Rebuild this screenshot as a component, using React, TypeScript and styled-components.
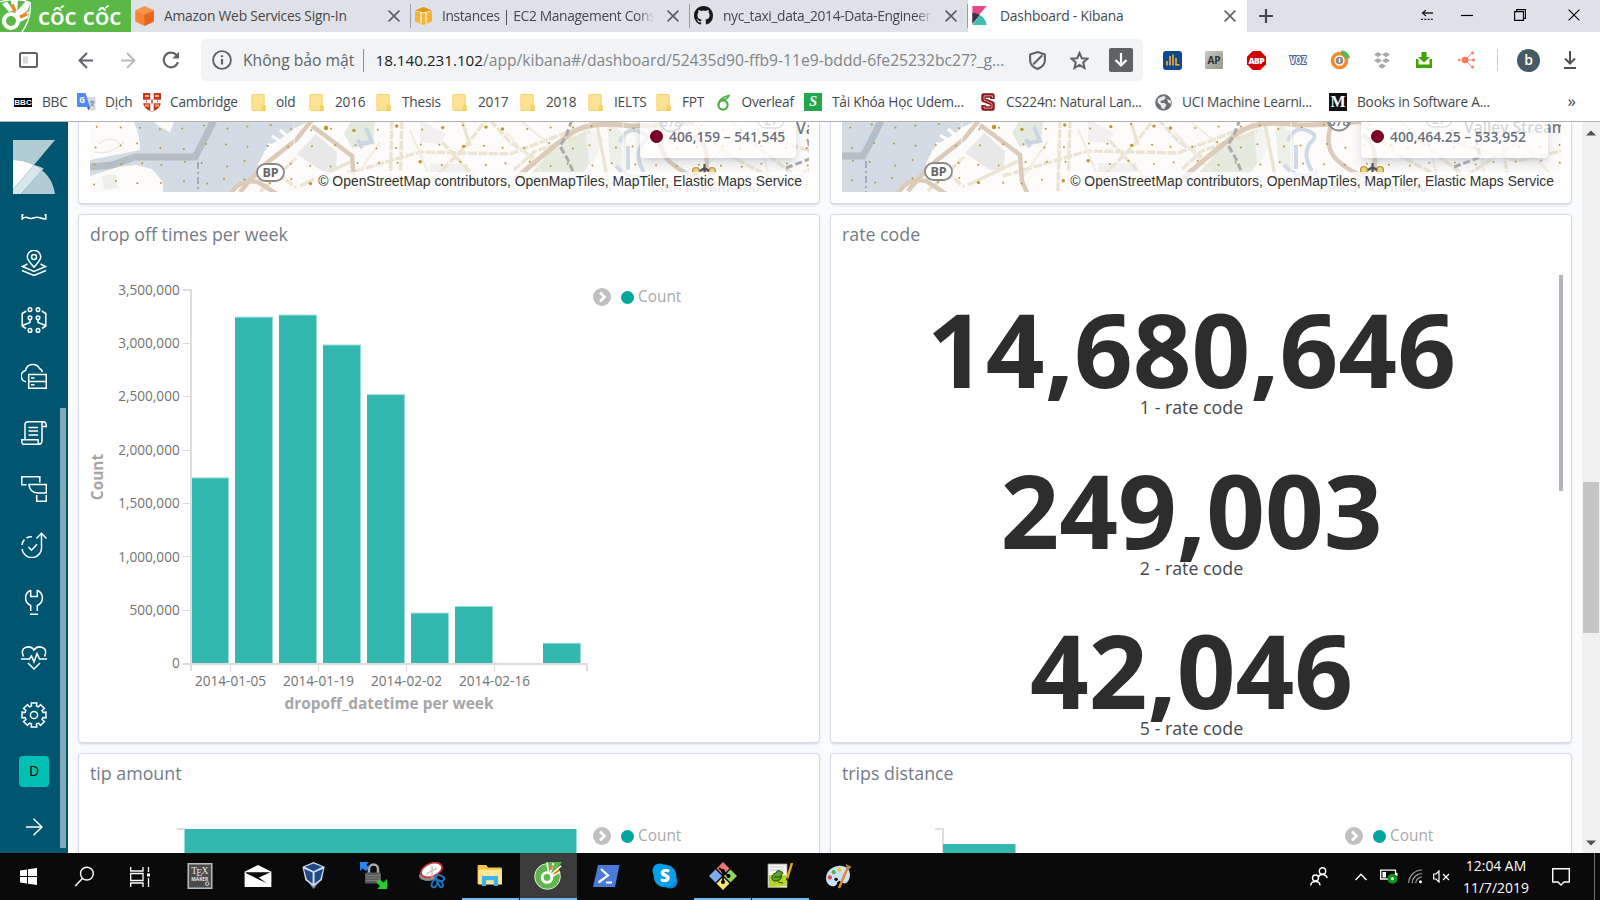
import React from 'react';
import styled, { createGlobalStyle, css } from 'styled-components';

const GlobalStyle = createGlobalStyle`
  * { box-sizing: border-box; }
  html, body { margin: 0; padding: 0; overflow: hidden; }
  body { font-family: 'Open Sans', 'Noto Sans', sans-serif; color: #2d2d2d; }
  svg { display: block; flex: none; }
`;

const Screen = styled.div`
  width: 1600px;
  height: 900px;
  display: flex;
  flex-direction: column;
  overflow: hidden;
  background: #fff;
`;

/* ---------- browser chrome ---------- */

const TabStrip = styled.div`
  display: flex;
  height: 32px;
  flex: none;
  background: #dee1e6;
`;

const Brand = styled.div`
  width: 131px;
  height: 32px;
  flex: none;
  display: flex;
  align-items: center;
  background: #5ab946;
  overflow: hidden;
`;

const BrandName = styled.span`
  margin-left: 6px;
  color: #fff;
  font-size: 24px;
  line-height: 30px;
  font-weight: 600;
  white-space: nowrap;
`;

const Tab = styled.div<{ $width: number; $active?: boolean; $divider?: boolean }>`
  width: ${p => p.$width}px;
  height: 32px;
  flex: none;
  display: flex;
  align-items: center;
  padding: 0 11px 1px 4px;
  background: ${p => (p.$active ? '#fff' : 'transparent')};
  ${p => p.$divider && css`
    background: linear-gradient(#9a9da2, #9a9da2) right 4px / 1px 24px no-repeat;
  `}
`;

const TabTitle = styled.span<{ $fade?: boolean; $gap?: number }>`
  flex: 1;
  margin: 0 8px 0 ${p => p.$gap ?? 10}px;
  overflow: hidden;
  white-space: nowrap;
  font-size: 13.8px;
  letter-spacing: -0.2px;
  line-height: 22px;
  color: #45494d;
  ${p => p.$fade && css`
    letter-spacing: -0.36px;
    mask-image: linear-gradient(90deg, #000 90%, transparent 98%);
  `}
`;

const StripSpacer = styled.div`
  flex: 1;
`;

const WindowControls = styled.div`
  display: grid;
  grid-template-columns: 40px 40px 66px 42px;
  justify-items: center;
  align-items: center;
  padding: 0 5px 2px 0;
`;

const NewTab = styled.div`
  display: flex;
  align-items: center;
  padding: 0 0 1px 12px;
`;

const Toolbar = styled.div`
  height: 52px;
  flex: none;
  display: flex;
  padding-top: 7px;
`;

const NavButtons = styled.div`
  width: 201px;
  height: 42px;
  display: grid;
  grid-template-columns: 56px 59px 27px 57px;
  justify-items: center;
  align-items: center;
`;

const Omnibox = styled.div`
  width: 942px;
  height: 42px;
  display: flex;
  align-items: center;
  padding: 0 10px 0 11px;
  border-radius: 5px;
  background: #f1f3f4;
  font-size: 15.66px;
`;

const SecurityLabel = styled.span`
  width: 121px;
  margin-left: 11px;
  padding-bottom: 1px;
  color: #5f6368;
  white-space: nowrap;
  border-right: 1px solid #8a8d91;
`;

const Address = styled.span`
  flex: 1;
  margin-left: 11.5px;
  color: #80868b;
  white-space: nowrap;
  padding-bottom: 1px;
`;

const AddressHost = styled.span`
  color: #202124;
  font-size: 15.2px;
`;

const OmniActions = styled.div`
  display: grid;
  grid-template-columns: 41.5px 39px 24px;
  align-items: center;
`;

const Extensions = styled.div`
  height: 42px;
  padding-left: 8px;
  display: grid;
  grid-template-columns: repeat(8, 42px);
  justify-items: center;
  align-items: center;
`;

const ProfileArea = styled.div`
  height: 22px;
  flex: 1;
  display: flex;
  align-items: center;
  margin: 10px 0 10px 10px;
  padding-left: 19px;
  border-left: 1px solid #c8cacc;
`;

const Avatar = styled.span`
  width: 23px;
  height: 23px;
  margin-right: 24px;
  border-radius: 50%;
  background: #455a64;
  color: #fff;
  font-size: 14px;
  font-weight: 600;
  line-height: 22px;
  text-align: center;
`;

const BookmarkBar = styled.div`
  height: 38px;
  flex: none;
  display: flex;
  align-items: center;
  padding: 0 0 1px 14px;
  border-bottom: 1px solid #b3b3b3;
`;

const Bookmark = styled.div<{ $width: number; $gap: number }>`
  width: ${p => p.$width}px;
  flex: none;
  display: flex;
  align-items: center;
  gap: ${p => p.$gap}px;
  font-size: 13.7px;
  letter-spacing: -0.22px;
  line-height: 20px;
  color: #45494d;
  white-space: nowrap;
`;

const BbcMark = styled.span`
  width: 18px;
  height: 9px;
  background: #000;
  color: #fff;
  font: 700 8px/9px 'Liberation Sans', sans-serif;
  letter-spacing: 0;
  text-align: center;
`;

const LetterTile = styled.span<{ $bg: string; $size: number; $font?: string; $color?: string; $radius?: number }>`
  width: ${p => p.$size}px;
  height: ${p => p.$size}px;
  flex: none;
  border-radius: ${p => p.$radius ?? 0}px;
  background: ${p => p.$bg};
  color: ${p => p.$color ?? '#fff'};
  font: ${p => p.$font ?? "700 13px 'Liberation Serif', serif"};
  line-height: ${p => p.$size}px;
  text-align: center;
`;

const Overflow = styled.span`
  margin-left: auto;
  margin-right: 24px;
  padding-bottom: 3px;
  font-size: 17px;
  line-height: 18px;
  color: #45494d;
`;

/* ---------- dashboard ---------- */

const Page = styled.div`
  height: 731px;
  flex: none;
  display: flex;
  overflow: hidden;
`;

const SideNav = styled.nav`
  width: 68px;
  flex: none;
  display: flex;
  background: #005571;
`;

const NavItems = styled.div`
  width: 60px;
  display: flex;
  flex-direction: column;
  padding: 18px 0 0 8px;
`;

const NavItem = styled.div`
  height: 56.4px;
  flex: none;
  display: flex;
  align-items: center;
  justify-content: center;
`;

const LogoItem = styled.div`
  height: 95.3px;
  flex: none;
  padding-left: 5px;
  display: flex;
  flex-direction: column;
  gap: 20px;
`;

const ClippedIcon = styled.div`
  padding-left: 8px;
`;

const SpaceBadge = styled.span`
  width: 30px;
  height: 31px;
  border-radius: 4px;
  background: #00bfb3;
  color: #000;
  font-size: 14px;
  line-height: 30px;
  text-align: center;
`;

const NavThumb = styled.div`
  width: 6px;
  height: 440px;
  margin-top: 286px;
  background: #80aab8;
`;

const Board = styled.main`
  flex: 1;
  display: grid;
  grid-template-columns: 742px 742px;
  grid-template-rows: 82px 529px 200px;
  gap: 10px;
  padding-left: 10px;
  background: #fafbfd;
  overflow: hidden;
`;

const Panel = styled.section<{ $cut?: boolean }>`
  display: flex;
  flex-direction: column;
  overflow: hidden;
  background: #fff;
  border: 1px solid #d3dae6;
  border-radius: 4px;
  box-shadow: 0 2px 2px -1px rgba(152, 162, 179, 0.3), 0 1px 5px -2px rgba(152, 162, 179, 0.3);
  ${p => p.$cut && css`
    border-top: 0;
    border-top-left-radius: 0;
    border-top-right-radius: 0;
  `}
`;

const PanelTitle = styled.h2`
  height: 38px;
  flex: none;
  margin: 0;
  padding-left: 11px;
  font-size: 17.8px;
  font-weight: 400;
  line-height: 39px;
  color: #747b87;
`;

const PanelBody = styled.div`
  flex: 1;
  display: flex;
  padding-left: 11px;
  min-height: 0;
`;

const MapFrame = styled.div`
  position: relative;
  width: 719px;
  height: 70px;
  margin-left: 11px;
  overflow: hidden;
`;

const MapLegend = styled.div<{ $width: number; $right: number }>`
  position: absolute;
  top: -40px;
  right: ${p => p.$right}px;
  width: ${p => p.$width}px;
  height: 76px;
  display: flex;
  align-items: flex-end;
  gap: 6px;
  padding: 0 0 12px 10px;
  border-radius: 4px;
  background: rgba(255, 255, 255, 0.7);
  box-shadow: 0 6px 12px -1px rgba(152, 162, 179, 0.35), 0 2px 4px -1px rgba(152, 162, 179, 0.3);
  color: #69707d;
  font-size: 13.8px;
  font-weight: 600;
  line-height: 18px;
  white-space: nowrap;
`;

const MapLegendDot = styled.i`
  width: 13px;
  height: 13px;
  margin-bottom: 3px;
  border-radius: 50%;
  background: #800026;
  border: 1px solid #5a001b;
`;

const Attribution = styled.div`
  position: absolute;
  right: 0;
  bottom: 0;
  height: 20px;
  padding: 0 7px 0 4px;
  background: rgba(255, 255, 255, 0.75);
  color: #333;
  font: 13.92px/19px 'Liberation Sans', sans-serif;
  white-space: nowrap;
`;

const Legend = styled.div`
  height: 20px;
  display: flex;
  align-items: center;
  margin: 34px 0 0 1px;
  color: #a9a9a9;
  font-size: 15.4px;
  line-height: 18px;
`;

const LegendDot = styled.i`
  width: 13px;
  height: 13px;
  margin: 0 4px 0 10px;
  border-radius: 50%;
  background: #00a69b;
`;

const MetricList = styled.div`
  flex: 1;
  display: flex;
  flex-direction: column;
  align-items: center;
  padding-top: 45px;
`;

const Metric = styled.div`
  height: 160.6px;
  flex: none;
  display: flex;
  flex-direction: column;
  align-items: center;
`;

const MetricValue = styled.div`
  font-size: 102.8px;
  font-weight: 700;
  line-height: 101px;
  color: #2d2d2d;
`;

const MetricLabel = styled.div`
  margin-top: -4px;
  font-size: 17.8px;
  line-height: 24px;
  color: #45484e;
`;

const MetricThumb = styled.div`
  width: 4px;
  height: 216px;
  margin: 22px 8px 0 18px;
  background: #b2b5bd;
`;

const PageScroll = styled.div`
  width: 18px;
  flex: none;
  display: flex;
  flex-direction: column;
  align-items: center;
  padding-top: 8px;
  background: #f0f0f0;
`;

const PageThumb = styled.div`
  width: 16px;
  height: 151px;
  margin: 346px 0 207px;
  background: #c5c5c5;
`;

/* ---------- taskbar ---------- */

const Taskbar = styled.footer`
  height: 47px;
  flex: none;
  display: flex;
  background: #0a0a0a;
`;

const SystemButtons = styled.div`
  width: 171px;
  display: grid;
  grid-template-columns: 56px 56px 56px;
  justify-items: center;
  align-items: center;
`;

const TaskButton = styled.div<{ $open?: boolean; $active?: boolean }>`
  width: 57px;
  margin-right: 1.15px;
  display: flex;
  align-items: center;
  justify-content: center;
  border-bottom: 2px solid ${p => (p.$open ? '#76b9ed' : 'transparent')};
  background: ${p => (p.$active ? '#3b3b3b' : 'transparent')};
  background-clip: padding-box;
`;

const Tray = styled.div`
  flex: 1;
  display: flex;
  align-items: center;
  justify-content: flex-end;
`;

const TrayIcon = styled.span<{ $after: number }>`
  margin-right: ${p => p.$after}px;
`;

const Clock = styled.div`
  width: 68px;
  margin-right: 22px;
  color: #fff;
  font-size: 13.9px;
  line-height: 21.6px;
  text-align: center;
`;

const ShowDesktop = styled.div`
  width: 6px;
  height: 47px;
  border-left: 1px solid #6d6d6d;
`;

/* ---------- chrome icons ---------- */

const CloseIcon = ({ size = 12, color = '#5f6368', w = 1.7 }: { size?: number; color?: string; w?: number }) => (
  <svg width={size} height={size} viewBox="0 0 12 12" stroke={color} strokeWidth={w}>
    <path d="M.6.6 11.4 11.4M11.4.6.6 11.4" />
  </svg>
);

const BrandBird = () => (
  <svg width="32" height="32" viewBox="0 0 32 32">
    <path d="M9 12 2 4 7 1.500 13 10ZM12 11 11 0H18L17 12ZM15 13 26 1 30 3 28 10 18 18ZM18 17 29 11 28 18 20 22Z" fill="#fff" />
    <path d="M0 2Q16-3 30 2.500Q32 18 22 32" fill="none" stroke="#fff" strokeWidth="1.300" />
    <circle cx="11" cy="21" r="7" fill="#5ab946" stroke="#fff" strokeWidth="4" />
    <path d="M12 4.500 15 11.500M27 14 20 17" stroke="#f58220" strokeWidth="3.400" />
  </svg>
);

const AwsCube = () => (
  <svg width="19" height="20" viewBox="0 0 19 20.500">
    <path d="M9.500 0 19 4.500V16L9.500 20.500 0 16V4.500Z" fill="#f58534" />
    <path d="M9.500 9 19 4.500V16L9.500 20.500Z" fill="#e8651c" />
    <path d="M0 4.500 9.500 0 19 4.500 9.500 9Z" fill="#f9a25b" opacity=".55" />
  </svg>
);

const Ec2Cube = () => (
  <svg width="17" height="18" viewBox="0 0 17 18">
    <path d="M0 3.500 8.500 0 17 3.500V14.500L8.500 18 0 14.500Z" fill="#f7b334" />
    <path d="M0 3.500 8.500 6 17 3.500" fill="none" stroke="#fff" strokeWidth="1" />
    <path d="M6 6V16.500M11 6V16.500" stroke="#fff" strokeWidth="1.100" />
    <path d="M0 3.500 8.500 0 17 3.500 8.500 5.500Z" fill="#e19a1c" />
  </svg>
);

const GithubMark = () => (
  <svg width="19" height="19" viewBox="0 0 16 16" fill="#191717">
    <path d="M8 0C3.580 0 0 3.580 0 8c0 3.540 2.290 6.530 5.470 7.590.4.070.55-.17.55-.38 0-.19-.01-.82-.01-1.490-2.010.37-2.530-.49-2.690-.94-.09-.23-.48-.94-.82-1.130-.28-.15-.68-.52-.01-.53.63-.01 1.080.58 1.230.82.72 1.210 1.870.87 2.330.66.07-.52.28-.87.51-1.070-1.780-.2-3.640-.89-3.640-3.950 0-.87.31-1.590.82-2.150-.08-.2-.36-1.020.08-2.120 0 0 .67-.21 2.200.82a7.500 7.500 0 0 1 4 0c1.530-1.040 2.200-.82 2.200-.82.44 1.100.16 1.920.08 2.120.51.56.82 1.270.82 2.150 0 3.070-1.870 3.750-3.650 3.950.29.25.54.73.54 1.480 0 1.070-.01 1.930-.01 2.200 0 .21.15.46.55.38A8.010 8.010 0 0 0 16 8c0-4.420-3.580-8-8-8Z" />
  </svg>
);

const KibanaFavicon = () => (
  <svg width="15" height="19" viewBox="0 0 15 20">
    <path d="M0 0H15L0 18Z" fill="#e9478b" />
    <path d="M0 7Q5 7.500 8 9.500L0 19Z" fill="#343741" />
    <path d="M0 20 8 9.500Q14 13 15 20Z" fill="#3ebeb0" />
  </svg>
);

const SidePanelIcon = () => (
  <svg width="19" height="16" viewBox="0 0 19 16">
    <rect x="1" y="1" width="17" height="14" rx="1.500" fill="none" stroke="#5f6368" strokeWidth="2" />
    <rect x="4" y="4.500" width="5" height="7" fill="#d8d8d8" />
  </svg>
);

const ArrowLeft = ({ color = '#5f6368', flip = false }: { color?: string; flip?: boolean }) => (
  <svg width="15" height="17" viewBox="0 0 15 17" fill="none" stroke={color} strokeWidth="2">
    <path d={flip ? 'M0 8.500H13M6 1l7.500 7.500L6 16' : 'M15 8.500H2M9 1 1.500 8.500 9 16'} />
  </svg>
);

const ReloadIcon = () => (
  <svg width="18" height="18" viewBox="0 0 18 18" fill="none" stroke="#5f6368" strokeWidth="2.200">
    <path d="M16 11.200A7.300 7.300 0 1 1 14.600 4.200" />
    <path d="M17 .8V7.500H10.300Z" fill="#5f6368" stroke="none" />
  </svg>
);

const InfoIcon = () => (
  <svg width="20" height="20" viewBox="0 0 20 20">
    <circle cx="10" cy="10" r="8.900" fill="none" stroke="#5f6368" strokeWidth="1.900" />
    <path d="M10 9v5.500M10 5.200v2" stroke="#5f6368" strokeWidth="2.200" />
  </svg>
);

const ShieldIcon = () => (
  <svg width="17" height="19" viewBox="0 0 17 19" fill="none" stroke="#5f6368" strokeWidth="2.100">
    <path d="M8.500 1.100 15.900 3.500V9c0 4.500-3 7.300-7.400 9C4.100 16.300 1.100 13.500 1.100 9V3.500Z" />
    <path d="M4.300 13.300 13.300 4.300" />
  </svg>
);

const StarIcon = () => (
  <svg width="19" height="19" viewBox="0.500 0 19 19" fill="none" stroke="#5f6368" strokeWidth="2">
    <path d="M10 2 12.300 7.200 18 7.700 13.700 11.400 15 17 10 14 5 17 6.300 11.400 2 7.700 7.700 7.200Z" />
  </svg>
);

const SaveBox = () => (
  <svg width="24" height="24" viewBox="0 0 24 24">
    <rect width="24" height="24" rx="2" fill="#5f6368" />
    <path d="M12 5V17M6.500 12 12 17.500 17.500 12" fill="none" stroke="#fff" strokeWidth="2.200" />
  </svg>
);

const AnalyticsIcon = () => (
  <svg width="19" height="19" viewBox="0 0 19 19">
    <rect width="19" height="19" rx="3" fill="#0b4a8f" />
    <path d="M4 14.500V10M7 14.500V5M10 14.500V3.500M13 14.500V7" stroke="#f5a623" strokeWidth="1.700" />
    <path d="M12.500 13.800h4" stroke="#f5a623" strokeWidth="1.600" />
  </svg>
);

const AdblockIcon = () => (
  <svg width="19" height="19" viewBox="0 0 20 20">
    <path d="M6 0h8l6 6v8l-6 6H6L0 14V6Z" fill="#d40000" />
    <text x="10" y="13.500" textAnchor="middle" fontSize="9" fontWeight="800" fill="#fff" textLength="17">ABP</text>
  </svg>
);

const VozIcon = () => (
  <svg width="20" height="14" viewBox="0 0 20 14">
    <text x="10" y="11" textAnchor="middle" fontSize="10.500" fontWeight="700" fill="#f4f7fd" stroke="#4a6396" strokeWidth="1.900" paintOrder="stroke" fontStretch="75%">VOZ</text>
  </svg>
);

const RingIcon = () => (
  <svg width="20" height="20" viewBox="0 0 20 20">
    <circle cx="9.500" cy="10.500" r="7" fill="none" stroke="#f58a2c" strokeWidth="3.600" />
    <path d="M11 2.500A8 8 0 0 1 18 8.500" fill="none" stroke="#5cb85c" strokeWidth="4.500" />
    <circle cx="9.500" cy="10.500" r="3.800" fill="#8b8b8b" />
    <path d="M9.500 8.500v4" stroke="#fff" strokeWidth="1.500" />
  </svg>
);

const DropboxIcon = () => (
  <svg width="16" height="17" viewBox="0 0 16 17" fill="#a9a9a9">
    <path d="M4 0 8 2.600 4 5.200 0 2.600ZM12 0 16 2.600 12 5.200 8 2.600ZM4 6 8 8.600 4 11.200 0 8.600ZM12 6 16 8.600 12 11.200 8 8.600ZM8 11.500 12 14 8 16.700 4 14Z" />
  </svg>
);

const GreenDownload = () => (
  <svg width="16" height="16" viewBox="0 0 16 16" fill="#3fa606">
    <path d="M5.500 0h5v5h3.500L8 10.500 2 5h3.500Z" />
    <path d="M0 7h2.500v5.500h11V7H16v9H0Z" />
  </svg>
);

const HubIcon = () => (
  <svg width="17" height="18" viewBox="0 0 17 18" fill="#ff7a59" stroke="#ff7a59">
    <path d="M1 9h6M7 9l7-7M7 9l7 7M7 9h8" strokeWidth=".8" />
    <circle cx="7" cy="9" r="3" />
    <circle cx="1" cy="9" r=".8" />
    <circle cx="14.500" cy="2" r="1.100" /><circle cx="15.500" cy="9" r="1.100" /><circle cx="14.500" cy="16" r="1.100" />
  </svg>
);

const DownloadIcon = () => (
  <svg width="12" height="18" viewBox="0 0 12 18" fill="none" stroke="#4c4f53" strokeWidth="2">
    <path d="M6 0V12M1 7.500 6 12.500 11 7.500M0 17H12" />
  </svg>
);

const TranslateIcon = () => (
  <svg width="19" height="18" viewBox="0 0 19 18">
    <path d="M9 4H18.500V17.500H12Z" fill="#d9d9d9" />
    <path d="M0 0H8.500L13 14H1Q0 14 0 13Z" fill="#4c8bf5" />
    <path d="M10 14H13L11.500 17.500Z" fill="#2c5fc4" />
    <text x="5" y="10" textAnchor="middle" fontSize="8" fontWeight="700" fill="#fff">G</text>
    <path d="M13 9h4.500M15 7.500V9M16.500 9Q16 12 13.500 13.500M14 10.500 17 13.500" fill="none" stroke="#6d7a80" strokeWidth=".9" />
  </svg>
);

const Crest = () => (
  <svg width="18" height="19" viewBox="0 0 18 19">
    <path d="M0 0H18V9Q18 15.500 9 19Q0 15.500 0 9Z" fill="#c8372b" />
    <path d="M9 0V18.500M0 8.500H18" stroke="#fff" strokeWidth="3.400" />
    <path d="M2 3h4M12 3h4M2 12.500h4M12 12.500h4" stroke="#f0b54a" strokeWidth="2" />
    <path d="M9 6.500v4M3 8.500h1M14 8.500h1" stroke="#c8372b" strokeWidth="1.500" />
  </svg>
);

const Folder = () => (
  <svg width="15" height="17" viewBox="0 0 15 18">
    <path d="M1 .5H13.500V11.500L14.500 12.500V17.500H1Q.5 17.500.5 17V1Q.5.5 1 .5Z" fill="#fde293" stroke="#f6d165" strokeWidth="1" />
    <path d="M11.500 17V13.500a1.500 1.500 0 0 1 3 0V17.500H11Z" fill="#fbd75b" stroke="#eec244" strokeWidth=".6" />
  </svg>
);

const OverleafIcon = () => (
  <svg width="13" height="17" viewBox="0 0 13 17" fill="none" stroke="#4fae46">
    <circle cx="6" cy="11" r="4.600" strokeWidth="2.200" />
    <path d="M1.500 11Q1 4 12 1.500Q11 5 5 6" strokeWidth="1.700" />
  </svg>
);

const StanfordS = () => (
  <svg width="14" height="18" viewBox="0 0 14 18" fill="none" strokeLinejoin="round">
    <path d="M11.500 6V2.500H2.500V7L11.500 10.500V15.500H2.500V12" stroke="#8c1515" strokeWidth="4.400" />
    <path d="M11.500 5V2.800H3V7L11 10.500V15.200H3V13" stroke="#fff" strokeWidth=".8" opacity=".75" />
  </svg>
);

const GlobeIcon = () => (
  <svg width="17" height="17" viewBox="0 0 17 17">
    <circle cx="8.500" cy="8.500" r="8.300" fill="#6b6f74" />
    <path d="M3 4.500 8 2 11 3 9 6 5.500 7 6 9H9.500L11.500 11 9 15.500 6.500 14 5.500 11 2.500 8.500Z" fill="#e9eaeb" />
    <path d="M12 5 16 6.500V9.500L13.500 9Z" fill="#e9eaeb" />
  </svg>
);

/* ---------- side navigation icons ---------- */

const NavIcon = ({ children }: { children: React.ReactNode }) => (
  <svg width="26" height="26" viewBox="0 0 26 26" fill="none" stroke="#fff" strokeWidth="1.500">{children}</svg>
);

const KibanaLogo = () => (
  <svg width="42" height="54" viewBox="0 0 42 54">
    <path d="M0 0H42L21 25Q11 20 0 20Z" fill="#b2ccd4" />
    <path d="M0 20Q11 20 21 25L0 49.500Z" fill="#fff" />
    <path d="M21 25 0 49.500V54H8L30.500 28.500Q26 26 21 25Z" fill="#d9e6ea" />
    <path d="M21 25Q39 34 42 54H8L30 28.500Z" fill="#b2ccd4" />
  </svg>
);

const gearPath = (() => {
  const pts: string[] = [];
  for (let i = 0; i < 8; i++) {
    const a = (i * Math.PI) / 4 - Math.PI / 2;
    ([[-0.27, 9.3], [-0.23, 12.3], [0.23, 12.3], [0.27, 9.3]] as const).forEach(([d, r]) => {
      pts.push(`${(13 + r * Math.cos(a + d)).toFixed(2)} ${(13 + r * Math.sin(a + d)).toFixed(2)}`);
    });
  }
  return `M${pts.join('L')}Z`;
})();

const navIcons: React.ReactNode[] = [
  <>
    <path d="M13 17.200C8.800 12.500 6.300 10 6.300 7a6.700 6.700 0 0 1 13.400 0c0 3-2.500 5.500-6.700 10.200Z" />
    <circle cx="13" cy="7" r="2.500" />
    <path d="M6.500 14 1.500 16.500 13 21.500 24.500 16.500 19.500 14M1 20.500 13 25.500 25 20.500" />
  </>,
  <>
    {[[9, 2.6], [17, 2.6], [9, 10.8], [17, 10.8], [9, 23.4], [17, 23.4]].map(([x, y]) => (
      <circle key={`${x}-${y}`} cx={x} cy={y} r="1.800" />
    ))}
    <path d="M5.300 4 1.200 6.500V19L5 21.500M20.700 4 24.800 6.500V19L21 21.500M1.500 18.500 9 15.500V12.500M24.500 18.500 17 15.500V12.500" />
  </>,
  <>
    <path d="M5 18.800A5.800 5.800 0 0 1 4.500 7.500 7.500 7.500 0 0 1 18.500 5.500Q21 6.500 21.500 9" />
    <path d="M7.700 11.500H25.300V25.300H7.700ZM7.700 18.400H25.300M10 15h3.500M10 21.800h3.500" />
  </>,
  <>
    <path d="M4 19V4.500Q4 1.700 7 1.700H22.500Q25.300 1.700 25.300 6.500H21V20Q21 24.300 18 24.300H2.500Q.7 24.300.7 19.700H17Q17 24.300 19 24.300M21 6.500V4Q21 1.700 23 1.700" />
    <path d="M7.500 7.500H17M7.500 11H17M7.500 15H17" />
  </>,
  <>
    <path d="M5.500 8.800H.8V.8H18.800V6.500" />
    <path d="M8 8.500H25.300V17H17Q8.500 16.500 8 8.500Z" />
    <path d="M15.700 19V25.300H25.300V19" />
  </>,
  <>
    <path d="M20.500 1.500V14.500A9.800 9.800 0 0 1 1 17M1 13Q1.500 9.500 3.500 7.500M5.500 6Q8 4.500 11 4.700" />
    <path d="M15.500 6.500 20.500 1.300 25.500 6.500M7.500 15 10.500 18.200 16 12.200" />
  </>,
  <>
    <path d="M9.700 1.200A8.300 8.300 0 0 0 9.700 16.500V22M16.300 1.200A8.300 8.300 0 0 1 16.300 16.500V22M9.700 1V7.500H16.300V1M9 25.200H17" />
  </>,
  <>
    <path d="M2.500 11.500Q-.5 4.500 4.500 2.500Q10 .5 13 5Q16 .5 21.500 2.500Q26.500 4.500 23.500 11.500" />
    <path d="M0 14H8.500L10.500 11 13 17 16 8.500 18.500 14H26M7 18 13 24 19 18" />
  </>,
  <>
    <path d={gearPath} />
    <circle cx="13" cy="13" r="3.600" />
  </>,
];

/* ---------- map drawing ---------- */

const mapPins = (() => {
  const pins: { x: number; y: number; big: boolean }[] = [];
  let seed = 11;
  const next = () => {
    seed = (seed * 16807) % 2147483647;
    return seed / 2147483647;
  };
  for (let row = 0; row < 4; row++) {
    for (let col = 0; col < 38; col++) {
      const big = next() > 0.85 && col > 9 && col < 20;
      pins.push({ x: 4 + col * 21.5 + next() * 6, y: 3 + row * 18 + next() * 6, big });
    }
  }
  return pins;
})();

const CityMap = ({ x, y }: { x: number; y: number }) => (
  <svg width="719" height="70" viewBox={`${x} ${y} 719 70`} fill="none">
    <rect x="0" y="-2" width="810" height="76" fill="#fdfbf9" />
    <path d="M43-2Q50 12 50 28L0 38V54L28 45 46 43 62 47 73 60V74H141L151 62 167 55 168 42 178 24 192 16 205 6 222-2Z" fill="#d3dbe4" />
    <path d="M62-2H85L80 10 70 5Z" fill="#fbfaf7" />
    <path d="M8 22Q22 12 30 22M4 30Q20 34 34 20" stroke="#e5e2dc" />
    <path d="M12 54 26 52 28 66 14 68Z" fill="#edf0e8" />
    <path d="M0 45 22 43 45 35H105L112 22 124-2" stroke="#b4bec6" strokeWidth="7" />
    <path d="M108 40V74" stroke="#a7a8b6" strokeWidth="2" strokeDasharray="7 3 2 3" />
    <path d="M182 14l8 5M178 22l9 4M174 30l9 4M190 8l7 6" stroke="#fff" strokeWidth="3" />
    <path d="M207 32 226 12 247 30 246 48 232 49Z" fill="#e8e8e8" />
    <path d="M262-2H285L283 22 262 26 254 12Z" fill="#e3eadf" />
    <path d="M276 6 282 20 270 22M268 18l4 8" stroke="#c9d5e2" strokeWidth="4" />
    <path d="M340 42H378V56H340ZM330-2 356 12 350 22 330 20Z" fill="#f1f0ee" />
    <path d="M432 62 458 32 478 18 500 6 504 34 488 60 470 68Z" fill="#e4eade" />
    <path d="M517-2 536 14 534 56 520 40Z" fill="#edf0e8" />
    <path d="M530 20Q536 4 550 10Q562 14 552 22Q544 34 554 50M526 44Q540 60 560 52M538 24V48" stroke="#cfdae6" strokeWidth="4" />
    <path d="M494-2 514 18 500 46Z" fill="#f3f4f1" />
    <g stroke="#ece4d3" strokeWidth="3.400">
      <path d="M180 44 206 66M206 36 170 70M245 55 330 30 420 32 520-6M302-2 300 70M312-2 310 70M330 70 376 24 396-2M352 20 380 50 404 74M400-2 420 20 444 36M424 48 444 30 500 10M598-2 640 34 690 60M640-2 664 22 700 50 720 70M690 20 760 40 803 30M740-2 752 70M700 60 780 8" strokeDasharray="9 1.500" />
      <path d="M506-2 520 70M372-2 380 24M210 64 260 40" />
    </g>
    <g stroke="#f2ecdf" strokeWidth="2">
      <path d="M262 60 290 20M320 8 346 70M416 10 470 70M430-2 480 40M600 60 650 10M666 0 680 60M720 0 728 70M764 20 803 66" />
    </g>
    <g stroke="#dccbb9">
      <path d="M222-2 206 18 178 40 162 56 150 70M222 4Q244 20 262 34L264 60 270 74" strokeWidth="4.500" />
      <path d="M140 72Q150 56 168 60L190 74" strokeWidth="4.500" />
      <path d="M424 58Q456 30 480 12Q500-2 540 4Q575 4 604 0" strokeWidth="5" />
      <path d="M576-2Q564 22 578 38Q596 56 630 62M604 14Q620 20 616 50" strokeWidth="4.500" />
    </g>
    <path d="M482-2 476 14 470 24 478 38 484 52M696 46 722 36 718 18 728 8" stroke="#a9a9ae" strokeWidth="3" strokeDasharray="7 3" />
    <path d="M533-2V74M204-2V74" stroke="#fff" strokeWidth=".8" />
    {mapPins.map((p, i) => (
      <circle key={i} cx={p.x} cy={p.y} r={p.big ? 1.700 : 1} fill="#b9972f" />
    ))}
    <circle cx="236" cy="6" r="2.200" fill="#b9972f" />
    <circle cx="606" cy="49" r="3.400" fill="#ecd58b" stroke="#c39b2c" strokeWidth="1.400" />
    <circle cx="622" cy="49" r="3.400" fill="#ecd58b" stroke="#c39b2c" strokeWidth="1.400" />
    <path d="M614.500 42v9M610 49l4.500-3 4.500 3" stroke="#4b4d52" strokeWidth="2.200" />
    <rect x="167" y="42" width="27" height="17" rx="8.500" fill="#fff" stroke="#8b8b8b" strokeWidth="1.800" />
    <text x="180.500" y="55" textAnchor="middle" fontSize="12.500" fontWeight="700" fill="#666">BP</text>
    <circle cx="581" cy="-2" r="11.500" fill="#fff" stroke="#8b8b8b" strokeWidth="1.800" />
    <text x="581" y="5" textAnchor="middle" fontSize="12" fontWeight="600" fill="#777">678</text>
    <rect x="668" y="-10" width="26" height="16" rx="8" fill="#fff" stroke="#999" strokeWidth="1.500" />
    <text x="681" y="3" textAnchor="middle" fontSize="12" fontWeight="600" fill="#777">27</text>
    <text x="706" y="12" fontSize="15.500" fontWeight="600" fill="#777" stroke="#fff" strokeWidth="2" paintOrder="stroke">Valley Stream</text>
    <text x="561" y="73" fontSize="14" fontWeight="600" fill="#aaa">John F. Kennedy</text>
  </svg>
);

/* ---------- charts ---------- */

const TEAL = '#33b8b0';
const weekly = [1740000, 3245000, 3265000, 2985000, 2520000, 473000, 535000, 0, 190000];
const yTicks = [0, 500000, 1000000, 1500000, 2000000, 2500000, 3000000, 3500000];
const xTicks = ['2014-01-05', '2014-01-19', '2014-02-02', '2014-02-16'];
const AXIS_Y = 411;
const scaleY = (v: number) => AXIS_Y - 0.4 - (v / 500000) * 53.37;

const WeeklyChart = () => (
  <svg width="502" height="470" viewBox="0 0 502 470">
    {weekly.map((v, i) => v > 0 && (
      <g key={i}>
        <rect x={101 + i * 44} y={scaleY(v) - 0.5} width="38" height={AXIS_Y - scaleY(v)} fill="#99dbd7" />
        <rect x={101 + i * 44} y={scaleY(v) + 0.5} width="37" height={AXIS_Y - 1 - scaleY(v)} fill={TEAL} />
      </g>
    ))}
    <g stroke="#ddd" fill="none">
      <path d="M101 36V418" strokeWidth="2" />
      <path d="M93 37H101M93 411H497V418" strokeWidth="2" />
      {yTicks.slice(1, 7).map(v => <path key={v} d={`M93 ${Math.floor(scaleY(v)) + 0.5}H101`} />)}
      {xTicks.map((t, i) => <path key={t} d={`M${140.5 + i * 88} 411V419`} />)}
    </g>
    <g fontSize="13.600" fill="#727272">
      {yTicks.map(v => (
        <text key={v} x="89.700" y={scaleY(v) + 4.700} textAnchor="end">{v.toLocaleString('en-US')}</text>
      ))}
      {xTicks.map((t, i) => <text key={t} x={140.500 + i * 88} y="433" textAnchor="middle">{t}</text>)}
    </g>
    <g fontSize="15.400" fontWeight="700" fill="#a6a6a6" textAnchor="middle">
      <text x="299" y="456">dropoff_datetime per week</text>
      <text transform="translate(12.800 224) rotate(-90)">Count</text>
    </g>
  </svg>
);

const TipChart = () => (
  <svg width="502" height="80" viewBox="0 0 502 80">
    <path d="M87 37H95V80" stroke="#ddd" strokeWidth="2" fill="none" />
    <rect x="95" y="37" width="391" height="43" fill={TEAL} />
    <path d="M94.500 37V80M486.500 37V80" stroke="#99dbd7" />
  </svg>
);

const DistanceChart = () => (
  <svg width="502" height="80" viewBox="0 0 502 80">
    <path d="M93 37H101V80" stroke="#ddd" strokeWidth="2" fill="none" />
    <rect x="101" y="52" width="72" height="28" fill={TEAL} />
    <path d="M173.500 52V80" stroke="#99dbd7" />
  </svg>
);

const ChartLegend = () => (
  <Legend>
    <svg width="18" height="18" viewBox="0 0 18 18">
      <circle cx="9" cy="9" r="9" fill="#c0c0c0" />
      <path d="M7 4.500 11.500 9 7 13.500" fill="none" stroke="#fff" strokeWidth="2.600" />
    </svg>
    <LegendDot />
    Count
  </Legend>
);

/* ---------- taskbar icons ---------- */

const WindowsIcon = () => (
  <svg width="17" height="17" viewBox="0 0 17 17" fill="#fff">
    <path d="M0 2.400 7 1.400V8H0ZM8 1.200 17 0V8H8ZM0 9H7V15.600L0 14.600ZM8 9H17V17L8 15.800Z" />
  </svg>
);

const SearchIcon = () => (
  <svg width="21" height="21" viewBox="0 0 21 22" fill="none" stroke="#fff" strokeWidth="1.500">
    <circle cx="13" cy="8" r="6.700" /><path d="M8.300 13 .8 21" />
  </svg>
);

const TaskViewIcon = () => (
  <svg width="21" height="20" viewBox="0 0 21 20" fill="none" stroke="#fff" strokeWidth="1.300">
    <path d="M.7 0V4H13V0M.7 20V16H13V20M.7 6.500H13V13.500H.7ZM18.500 0V5M18.500 11V20" />
    <path d="M17 6.500h3v3h-3Z" fill="#fff" stroke="none" />
  </svg>
);

const TexIcon = () => (
  <svg width="26" height="26" viewBox="0 0 26 27">
    <rect x=".8" y=".8" width="24.400" height="25.400" fill="#4b4b4b" stroke="#b9b9b9" strokeWidth="1.600" />
    <g fill="#e5e5e5" fontFamily="'Liberation Serif', serif">
      <text x="4" y="11.500" fontSize="10">T</text><text x="9" y="13.500" fontSize="10">E</text><text x="14.500" y="11.500" fontSize="10">X</text>
      <text x="4" y="19" fontSize="5" fontWeight="700" fontFamily="'Open Sans', sans-serif">MAKER</text>
    </g>
    <circle cx="20.500" cy="21.500" r="1.800" fill="none" stroke="#ddd" />
  </svg>
);

const MailIcon = () => (
  <svg width="28" height="22" viewBox="0 0 28 23">
    <path d="M0 7 14 0 28 7V23H0Z" fill="#fff" />
    <path d="M1 7.500H27L15 13 23 19 2 9Z" fill="#0a0a0a" />
  </svg>
);

const VirtualBoxIcon = () => (
  <svg width="27" height="27" viewBox="0 0 28 28">
    <path d="M4 18 12 28 20 18Z" fill="#7f93b8" />
    <path d="M12 0 23.500 5 20.500 19 12 25 3.500 19 .5 5Z" fill="#d5deec" />
    <path d="M12 1.500 21 5 12 9.500 3 5ZM2 7 11 11V22.500L5 18ZM22 7 13 11V22.500L19 18Z" fill="#1f4a86" />
  </svg>
);

const WinScpIcon = () => (
  <svg width="27" height="27" viewBox="0 0 27 27">
    <path d="M9 12V7a4.500 4.500 0 0 1 9 0v5" fill="none" stroke="#aaa" strokeWidth="2.500" />
    <rect x="5" y="10.500" width="16" height="11" rx="1.500" fill="#5b5b5b" />
    <path d="M6 13.500H20M6 16H20M6 18.500H20" stroke="#868686" strokeWidth=".8" />
    <path d="M0 0H9L6.500 2.500 9 6 6 9 2.500 6.500 0 9Z" fill="#2b83f0" />
    <path d="M27 27H17L20 24 16 20 19 17 23.500 20.500 27 17Z" fill="#27cf2c" />
  </svg>
);

const SnipIcon = () => (
  <svg width="27" height="27" viewBox="0 0 27 27">
    <ellipse cx="9" cy="14" rx="9" ry="5" fill="#8d8d8d" />
    <ellipse cx="12.500" cy="8" rx="11" ry="6.500" transform="rotate(-22 12.500 8)" fill="#fff" stroke="#d4313a" strokeWidth="1.700" />
    <path d="M13 4V16M7 12 18 6" stroke="#bbb" strokeWidth="1.300" />
    <g fill="none" stroke="#1878c9" strokeWidth="1.900"><ellipse cx="21" cy="16" rx="4.300" ry="2.500" transform="rotate(20 21 16)" /><ellipse cx="15.500" cy="21.500" rx="2.500" ry="4" transform="rotate(25 15.500 21.500)" /><ellipse cx="21.500" cy="22" rx="2" ry="3.500" transform="rotate(-30 21.500 22)" /></g>
  </svg>
);

const ExplorerIcon = () => (
  <svg width="26" height="21" viewBox="0 0 26 22">
    <path d="M0 1Q0 0 1 0H9L11 2.500H24Q25.500 2.500 25.500 4V20H0Z" fill="#f6c744" />
    <path d="M1 5H25.500V20.500H1Z" fill="#ffe596" />
    <path d="M4.500 11.500H21.500V22H17V16H9V22H4.500Z" fill="#3bb4ea" />
  </svg>
);

const CocCocIcon = () => (
  <svg width="28" height="28" viewBox="0 0 29 29">
    <circle cx="14" cy="15" r="13.300" fill="#5fb64e" stroke="#e2f2dd" strokeWidth="1" />
    <path d="M14 10 12 0H29L19 13Z" fill="#5fb64e" />
    <path d="M15 10 13.500 1M17 11 20 1M18.500 12.500 28 4M19.500 14.500 27 10" stroke="#fff" strokeWidth="1.800" />
    <path d="M17.500 8 19 3M21 12 26 8.500" stroke="#f58220" strokeWidth="2" />
    <circle cx="13.500" cy="16" r="5" fill="none" stroke="#fff" strokeWidth="3" />
  </svg>
);

const PowerShellIcon = () => (
  <svg width="27" height="22" viewBox="0 0 27 22">
    <path d="M5 0H26.500L22 22H0Z" fill="#4a7ad8" />
    <path d="M8 4 15 10.500 5.500 17.500M13 17.500H19" fill="none" stroke="#fff" strokeWidth="2.200" />
  </svg>
);

const SkypeIcon = () => (
  <svg width="26" height="26" viewBox="0 0 27 27">
    <circle cx="8" cy="8" r="7.500" fill="#00a3ea" /><circle cx="19" cy="19" r="7.500" fill="#0a86d8" /><circle cx="13.500" cy="13.500" r="11.800" fill="#0b9de6" />
    <text x="13.500" y="20" textAnchor="middle" fontSize="18" fontWeight="800" fill="#fff">S</text>
  </svg>
);

const GitIcon = () => (
  <svg width="28" height="28" viewBox="0 0 28 28">
    <path d="M14 0 20.500 6.500 14 13 7.500 6.500Z" fill="#f07575" /><path d="M21.500 7.500 28 14 21.500 20.500 15 14Z" fill="#8cd364" />
    <path d="M14 15 20.500 21.500 14 28 7.500 21.500Z" fill="#fde27b" /><path d="M6.500 7.500 13 14 6.500 20.500 0 14Z" fill="#81acf2" />
    <path d="M10 6 19.500 14M14 9V20" stroke="#0a0a0a" strokeWidth="1.800" /><circle cx="14" cy="9" r="2" /><circle cx="19.500" cy="14" r="2" /><circle cx="14" cy="20" r="2" />
  </svg>
);

const NotepadIcon = () => (
  <svg width="27" height="27" viewBox="0 0 27 27">
    <path d="M1 2H20V25.500H1Z" fill="#f4f4f4" stroke="#9a9a9a" strokeWidth=".8" />
    <path d="M2 13H19.500V24L2 25Z" fill="#b6d621" />
    <path d="M3 5H17M3 8H17" stroke="#bbb" strokeWidth=".7" />
    <path d="M5 17Q4 12 9 11Q10 7 14 9.500Q18 11 14 13Q16 17 10 19Q6 20 5 17ZM7 15h7M11 20l5 1" fill="#5aa52a" stroke="#1d3d0c" strokeWidth=".9" />
    <path d="M25 1 20 17" stroke="#e6a52e" strokeWidth="2.500" /><path d="M20.500 15.500 19.500 18.500" stroke="#333" strokeWidth="1.300" />
  </svg>
);

const PaintIcon = () => (
  <svg width="28" height="26" viewBox="0 0 28 27">
    <path d="M13 3C4 4-1 12 1 19c2 6 10 7 11 2 .5-3 3-3 5-1 3 3 7 0 8-5C27 8 22 2 13 3Z" fill="#c9e2f5" />
    <circle cx="4.500" cy="15" r="2.200" fill="#dd4a3c" /><circle cx="8.500" cy="9.500" r="2.200" fill="#55b04b" /><circle cx="14.500" cy="7" r="2.200" fill="#f2c335" /><circle cx="11" cy="17" r="1.800" fill="#0a0a0a" />
    <path d="M23 5 14 26" stroke="#e08a2c" strokeWidth="2.500" /><path d="M21 1 27 4 23 8Z" fill="#b5875d" />
  </svg>
);

const PeopleIcon = () => (
  <svg width="18" height="19" viewBox="0 0 18 19" fill="none" stroke="#fff" strokeWidth="1.400">
    <circle cx="12.500" cy="4" r="3.200" /><path d="M8.500 10Q9 7.500 12.500 7.500T17.300 11" />
    <circle cx="5.500" cy="11" r="3" /><path d="M.7 18.500Q1 14.500 5.500 14.500T10 18.500" />
  </svg>
);

const BatteryIcon = () => (
  <svg width="19" height="15" viewBox="0 0 19 15">
    <path d="M.7 1.200H15.500V10H.7Z" fill="none" stroke="#fff" strokeWidth="1.300" /><path d="M2.500 3H6V8.500H2.500ZM16 4h1.500v3H16Z" fill="#fff" />
    <circle cx="12.500" cy="9.700" r="5" fill="#13911f" /><circle cx="12.500" cy="9.700" r="1.600" fill="#cdeccf" />
  </svg>
);

const WifiIcon = () => (
  <svg width="14" height="15" viewBox="0 0 14 15" fill="none" stroke="#9d9d9d" strokeWidth="1.200">
    <path d="M.7 14A13.300 13.300 0 0 1 14 1M4.200 14A9.800 9.800 0 0 1 14 4.500M7.700 14A6.300 6.300 0 0 1 14 8" />
    <circle cx="12.500" cy="12.800" r="1.500" fill="#fff" stroke="none" />
  </svg>
);

const MutedIcon = () => (
  <svg width="17" height="13" viewBox="0 0 17 13" fill="none" stroke="#fff" strokeWidth="1.200">
    <path d="M.7 4H3L6 1V12L3 9H.7Z" /><path d="M10 4 16 10M16 4 10 10" />
  </svg>
);

const taskApps: { icon: React.ReactNode; open?: boolean; active?: boolean }[] = [
  { icon: <TexIcon /> },
  { icon: <MailIcon /> },
  { icon: <VirtualBoxIcon /> },
  { icon: <WinScpIcon /> },
  { icon: <SnipIcon /> },
  { icon: <ExplorerIcon />, open: true },
  { icon: <CocCocIcon />, open: true, active: true },
  { icon: <PowerShellIcon /> },
  { icon: <SkypeIcon /> },
  { icon: <GitIcon />, open: true },
  { icon: <NotepadIcon />, open: true },
  { icon: <PaintIcon /> },
];

const bookmarks: { label: string; icon: React.ReactNode; width: number; gap: number }[] = [
  { label: 'BBC', icon: <BbcMark>BBC</BbcMark>, width: 63, gap: 10 },
  { label: 'Dịch', icon: <TranslateIcon />, width: 66, gap: 9 },
  { label: 'Cambridge', icon: <Crest />, width: 108, gap: 9 },
  { label: 'old', icon: <Folder />, width: 58, gap: 10 },
  { label: '2016', icon: <Folder />, width: 67, gap: 11 },
  { label: 'Thesis', icon: <Folder />, width: 76, gap: 11 },
  { label: '2017', icon: <Folder />, width: 68, gap: 11 },
  { label: '2018', icon: <Folder />, width: 68, gap: 11 },
  { label: 'IELTS', icon: <Folder />, width: 68, gap: 11 },
  { label: 'FPT', icon: <Folder />, width: 60.5, gap: 11 },
  { label: 'Overleaf', icon: <OverleafIcon />, width: 87.5, gap: 12 },
  { label: 'Tải Khóa Học Udem...', icon: <LetterTile $bg="#22a84c" $size={18} $font="italic 700 14px 'Liberation Serif', serif">S</LetterTile>, width: 177, gap: 10 },
  { label: 'CS224n: Natural Lan...', icon: <StanfordS />, width: 174, gap: 11 },
  { label: 'UCI Machine Learni...', icon: <GlobeIcon />, width: 174, gap: 10 },
  { label: 'Books in Software A...', icon: <LetterTile $bg="#111" $size={18} $font="700 16px 'Liberation Serif', serif">M</LetterTile>, width: 170, gap: 10 },
];

const metrics = [
  ['14,680,646', '1 - rate code'],
  ['249,003', '2 - rate code'],
  ['42,046', '5 - rate code'],
];

const MAP_CREDIT = '© OpenStreetMap contributors, OpenMapTiles, MapTiler, Elastic Maps Service';

export default function App() {
  return (
    <Screen>
      <GlobalStyle />
      <TabStrip>
        <Brand>
          <BrandBird />
          <BrandName>cốc cốc</BrandName>
        </Brand>
        <Tab $width={280} $divider>
          <AwsCube />
          <TabTitle>Amazon Web Services Sign-In</TabTitle>
          <CloseIcon />
        </Tab>
        <Tab $width={279} $divider>
          <Ec2Cube />
          <TabTitle $fade>Instances | EC2 Management Console</TabTitle>
          <CloseIcon />
        </Tab>
        <Tab $width={278} $divider>
          <GithubMark />
          <TabTitle $fade>nyc_taxi_data_2014-Data-Engineering</TabTitle>
          <CloseIcon />
        </Tab>
        <Tab $width={279} $active>
          <KibanaFavicon />
          <TabTitle $gap={13}>Dashboard - Kibana</TabTitle>
          <CloseIcon />
        </Tab>
        <NewTab>
          <svg width="14" height="14" viewBox="0 0 14 14" stroke="#45494d" strokeWidth="2.200"><path d="M7 0V14M0 7H14" /></svg>
        </NewTab>
        <StripSpacer />
        <WindowControls>
          <svg width="12" height="10" viewBox="0 0 12 10" fill="none" stroke="#222" strokeWidth="1.300">
            <path d="M12 3H1.500M5 0 1.500 3 5 6" /><path d="M0 9.300H12" strokeDasharray="2 1.300" />
          </svg>
          <svg width="12" height="12" viewBox="0 0 12 12" stroke="#000" strokeWidth="1.200"><path d="M0 6.500H12" /></svg>
          <svg width="12" height="12" viewBox="0 0 12 12" fill="none" stroke="#000" strokeWidth="1.100">
            <path d="M.6 2.600H9.400V11.400H.6ZM2.600 2.600V.6H11.400V9.400H9.400" />
          </svg>
          <CloseIcon color="#000" w={1.1} />
        </WindowControls>
      </TabStrip>

      <Toolbar>
        <NavButtons>
          <SidePanelIcon />
          <ArrowLeft />
          <ArrowLeft flip color="#babcbe" />
          <ReloadIcon />
        </NavButtons>
        <Omnibox>
          <InfoIcon />
          <SecurityLabel>Không bảo mật</SecurityLabel>
          <Address>
            <AddressHost>18.140.231.102</AddressHost>/app/kibana#/dashboard/52435d90-ffb9-11e9-bddd-6fe25232bc27?_g...
          </Address>
          <OmniActions>
            <ShieldIcon />
            <StarIcon />
            <SaveBox />
          </OmniActions>
        </Omnibox>
        <Extensions>
          <AnalyticsIcon />
          <LetterTile $bg="linear-gradient(135deg, #c9c9c2, #96968e)" $size={18} $color="#333" $radius={1} $font="700 10px 'Open Sans', sans-serif">AP</LetterTile>
          <AdblockIcon />
          <VozIcon />
          <RingIcon />
          <DropboxIcon />
          <GreenDownload />
          <HubIcon />
        </Extensions>
        <ProfileArea>
          <Avatar>b</Avatar>
          <DownloadIcon />
        </ProfileArea>
      </Toolbar>

      <BookmarkBar>
        {bookmarks.map(b => (
          <Bookmark key={b.label} $width={b.width} $gap={b.gap}>
            {b.icon}
            {b.label}
          </Bookmark>
        ))}
        <Overflow>»</Overflow>
      </BookmarkBar>

      <Page>
        <SideNav>
          <NavItems>
            <LogoItem>
              <KibanaLogo />
              <ClippedIcon>
                <svg width="26" height="6" viewBox="0 0 26 6" fill="none" stroke="#fff" strokeWidth="1.500">
                  <path d="M2.500.7H1.200V5Q4 2.500 7 3.800T13 3.800T19 3.800T24.800 5V.7H23.500" />
                </svg>
              </ClippedIcon>
            </LogoItem>
            {navIcons.map((icon, i) => (
              <NavItem key={i}><NavIcon>{icon}</NavIcon></NavItem>
            ))}
            <NavItem><SpaceBadge>D</SpaceBadge></NavItem>
            <NavItem>
              <svg width="17" height="18" viewBox="0 0 17 18" fill="none" stroke="#fff" strokeWidth="1.500">
                <path d="M0 9H16M7.500.7 16 9 7.500 17.300" />
              </svg>
            </NavItem>
          </NavItems>
          <NavThumb />
        </SideNav>

        <Board>
          <Panel $cut>
            <MapFrame>
              <CityMap x={0} y={0} />
              <MapLegend $width={156} $right={13}><MapLegendDot />406,159 – 541,545</MapLegend>
              <Attribution>{MAP_CREDIT}</Attribution>
            </MapFrame>
          </Panel>
          <Panel $cut>
            <MapFrame>
              <CityMap x={84} y={1} />
              <MapLegend $width={187} $right={13}><MapLegendDot />400,464.25 – 533,952</MapLegend>
              <Attribution>{MAP_CREDIT}</Attribution>
            </MapFrame>
          </Panel>

          <Panel>
            <PanelTitle>drop off times per week</PanelTitle>
            <PanelBody>
              <WeeklyChart />
              <ChartLegend />
            </PanelBody>
          </Panel>
          <Panel>
            <PanelTitle>rate code</PanelTitle>
            <PanelBody>
              <MetricList>
                {metrics.map(([value, label]) => (
                  <Metric key={label}>
                    <MetricValue>{value}</MetricValue>
                    <MetricLabel>{label}</MetricLabel>
                  </Metric>
                ))}
              </MetricList>
              <MetricThumb />
            </PanelBody>
          </Panel>

          <Panel>
            <PanelTitle>tip amount</PanelTitle>
            <PanelBody>
              <TipChart />
              <ChartLegend />
            </PanelBody>
          </Panel>
          <Panel>
            <PanelTitle>trips distance</PanelTitle>
            <PanelBody>
              <DistanceChart />
              <ChartLegend />
            </PanelBody>
          </Panel>
        </Board>

        <PageScroll>
          <svg width="10" height="6" viewBox="0 0 10 6" fill="#505050"><path d="M0 5.500 5 .5 10 5.500Z" /></svg>
          <PageThumb />
          <svg width="10" height="6" viewBox="0 0 10 6" fill="#505050"><path d="M0 .5H10L5 5.500Z" /></svg>
        </PageScroll>
      </Page>

      <Taskbar>
        <SystemButtons>
          <WindowsIcon />
          <SearchIcon />
          <TaskViewIcon />
        </SystemButtons>
        {taskApps.map((app, i) => (
          <TaskButton key={i} $open={app.open} $active={app.active}>{app.icon}</TaskButton>
        ))}
        <Tray>
          <TrayIcon $after={27}><PeopleIcon /></TrayIcon>
          <TrayIcon $after={13}>
            <svg width="12" height="8" viewBox="0 0 12 8" fill="none" stroke="#fff" strokeWidth="1.400"><path d="M.5 7 6 1.200 11.500 7" /></svg>
          </TrayIcon>
          <TrayIcon $after={9}><BatteryIcon /></TrayIcon>
          <TrayIcon $after={11}><WifiIcon /></TrayIcon>
          <TrayIcon $after={12}><MutedIcon /></TrayIcon>
          <Clock>12:04 AM<br />11/7/2019</Clock>
          <TrayIcon $after={24}>
            <svg width="18" height="18" viewBox="0 0 18 18" fill="none" stroke="#fff" strokeWidth="1.400"><path d="M.7.7H17.300V14H12L9 17 6 14H.7Z" /></svg>
          </TrayIcon>
          <ShowDesktop />
        </Tray>
      </Taskbar>
    </Screen>
  );
}
